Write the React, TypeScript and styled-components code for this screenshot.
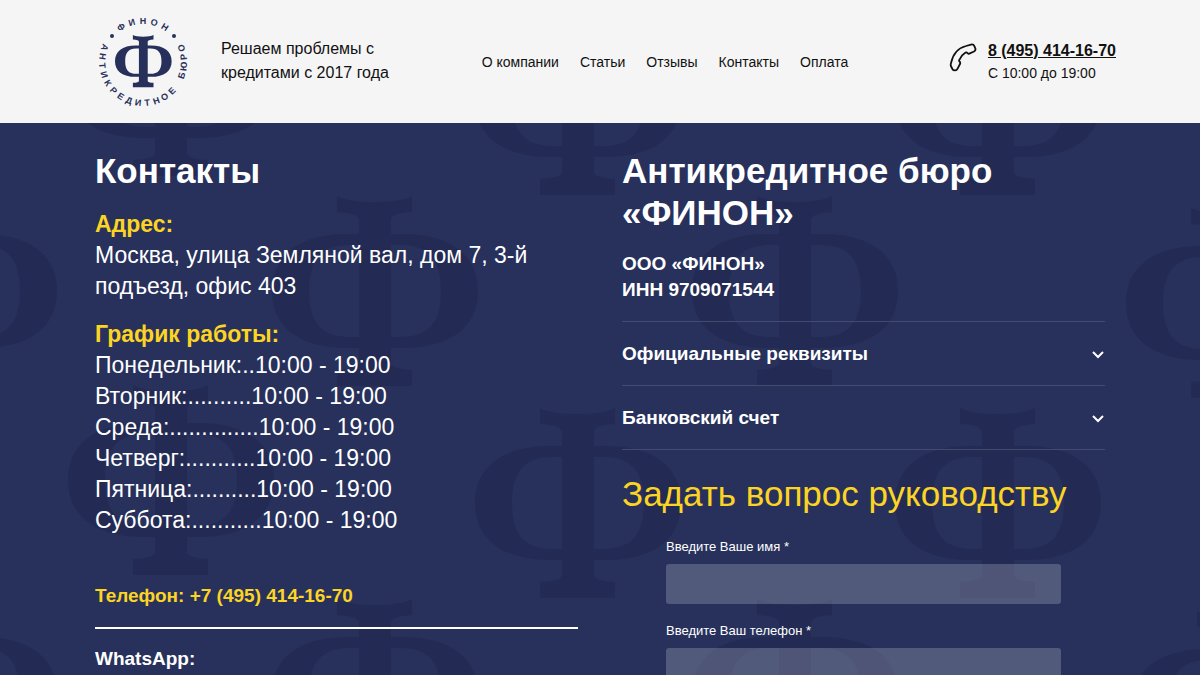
import React, { useId } from "react";
import styled, { createGlobalStyle } from "styled-components";

const GlobalStyle = createGlobalStyle`
  *, *::before, *::after { box-sizing: border-box; }
  html, body { margin: 0; }
  body {
    font-family: "Liberation Sans", Arial, sans-serif;
    background: #27315c;
    color: #111;
  }
  h1, h2, h3, p, ul { margin: 0; padding: 0; }
`;

const PHI =
  "M65 0 Q76 6 102 6 Q129 6 140 0 V16 Q119 17 119 24 V38 H130 C180 38 206 60 206 95 C206 130 180 152 130 152 H119 V167 Q119 173 140 174 V190 H65 V174 Q87 173 87 167 V152 H76 C26 152 0 130 0 95 C0 60 26 38 76 38 H87 V24 Q87 17 65 16 Z M87 49 H77 C49 49 37 64 37 95 C37 126 49 141 77 141 H87 Z M119 49 V141 H129 C157 141 169 126 169 95 C169 64 157 49 129 49 Z";

const Header = styled.header`
  background: #f5f5f5;
  padding: 12px 24px;
`;

const HeaderInner = styled.div`
  max-width: 1032px;
  margin: 0 auto;
  padding-left: 11px;
  display: flex;
  align-items: center;
  justify-content: space-between;
  min-height: 99px;
`;

const Brand = styled.div`
  display: flex;
  align-items: center;
  gap: 30px;
`;

const HomeLink = styled.a`
  display: block;
  line-height: 0;
`;

const Slogan = styled.p`
  width: 170px;
  padding-bottom: 2px;
  font-size: 16px;
  line-height: 24px;
`;

const Nav = styled.nav`
  display: flex;
  gap: 21px;
  margin-right: 10px;
`;

const NavLink = styled.a`
  color: #111;
  font-size: 14px;
  line-height: 20px;
  text-decoration: none;
`;

const Call = styled.div`
  display: flex;
  align-items: flex-start;
  gap: 11px;
  padding-bottom: 2px;
`;

const CallNumber = styled.a`
  display: block;
  color: #111;
  font-size: 16px;
  font-weight: 700;
  line-height: 24px;
`;

const CallHours = styled.p`
  font-size: 14px;
  line-height: 20px;
`;

const Main = styled.main`
  position: relative;
  overflow: hidden;
  color: #fff;
  padding: 27px 24px 40px;
`;

const Backdrop = styled.svg`
  position: absolute;
  top: 0;
  left: 50%;
  margin-left: -600px;
  overflow: visible;
`;

const Columns = styled.div`
  position: relative;
  max-width: 1010px;
  margin: 0 auto;
  display: grid;
  grid-template-columns: 1fr 1fr;
  column-gap: 44px;
`;

const Title = styled.h1`
  font-size: 35px;
  line-height: 42px;
  font-weight: 700;
`;

const Info = styled.section`
  margin-top: 17px;
  font-size: 23px;
  line-height: 31px;
`;

const InfoTitle = styled.h2`
  color: #fcd423;
  font-size: 23px;
  line-height: 31px;
`;

const Days = styled.ul`
  list-style: none;
`;

const PhoneLine = styled.a`
  display: block;
  margin-top: 46px;
  padding-bottom: 17px;
  border-bottom: 2px solid #fff;
  color: #fcd423;
  font-size: 19px;
  line-height: 28px;
  font-weight: 700;
  text-decoration: none;
`;

const Messenger = styled.p`
  margin-top: 17px;
  font-size: 19px;
  line-height: 26px;
  font-weight: 700;
`;

const Company = styled.p`
  margin: 17px 0 18px;
  font-size: 19px;
  line-height: 26px;
  font-weight: 700;
`;

const Accordion = styled.div`
  border-top: 1px solid #434b70;
`;

const AccordionButton = styled.button`
  width: 100%;
  display: flex;
  align-items: center;
  justify-content: space-between;
  padding: 18px 0;
  border: 0;
  border-bottom: 1px solid #434b70;
  background: none;
  color: #fff;
  font: 700 19px/27px "Liberation Sans", Arial, sans-serif;
  text-align: left;
`;

const AskTitle = styled.h2`
  margin-top: 23px;
  color: #fcd423;
  font-size: 35px;
  line-height: 42px;
  font-weight: 400;
`;

const Form = styled.form`
  margin-top: 22px;
  padding: 0 44px;
  display: grid;
  row-gap: 17px;
`;

const Field = styled.div`
  display: grid;
  row-gap: 7px;
`;

const Label = styled.label`
  font-size: 13px;
  line-height: 20px;
`;

const Input = styled.input`
  width: 100%;
  height: 40px;
  padding: 0 12px;
  border: 0;
  border-radius: 3px;
  background: rgba(255, 255, 255, 0.2);
  color: #fff;
  font: 16px "Liberation Sans", Arial, sans-serif;
`;

const ringTop = [..."ФИНОН"];
const ringBottom = [..."АНТИКРЕДИТНОЕ БЮРО"];

function Logo() {
  return (
    <svg width="96" height="96" viewBox="-48 -48 96 96" role="img" aria-label="Финон">
      <g transform="translate(-28 -27) scale(0.275)" fill="#27305b">
        <path d={PHI} />
      </g>
      <g fill="#27305b" fontFamily="Liberation Sans" fontWeight="700" fontSize="9" textAnchor="middle">
        {ringTop.map((c, i) => (
          <text key={i} y="-38" transform={`rotate(${(i - 2) * 16})`}>{c}</text>
        ))}
        {ringBottom.map((c, i) => (
          <text key={i} y="44" transform={`rotate(${111 - i * 13})`}>{c}</text>
        ))}
        <circle cx="-31" cy="-26" r="2" />
        <circle cx="31" cy="-26" r="2" />
      </g>
    </svg>
  );
}

const glyphs = [
  [68, -137], [475, -118], [895, -118],
  [-149, 73], [272, 73], [692, 73], [1126, 85],
  [68, 262], [475, 285], [895, 285],
  [-149, 476], [272, 476], [692, 476], [1132, 488],
];

function Pattern() {
  return (
    <Backdrop width="1400" height="700" aria-hidden="true">
      {glyphs.map(([x, y]) => (
        <path key={`${x} ${y}`} d={PHI} transform={`translate(${x} ${y})`} fill="#232b54" />
      ))}
    </Backdrop>
  );
}

function Chevron() {
  return (
    <svg width="14" height="14" viewBox="0 0 14 14" fill="none" stroke="#fff" strokeWidth="2" aria-hidden="true">
      <path d="M2 5 L7 10 L12 5" />
    </svg>
  );
}

const menu = ["О компании", "Статьи", "Отзывы", "Контакты", "Оплата"];
const days = [
  "Понедельник:..10:00 - 19:00",
  "Вторник:..........10:00 - 19:00",
  "Среда:..............10:00 - 19:00",
  "Четверг:...........10:00 - 19:00",
  "Пятница:..........10:00 - 19:00",
  "Суббота:...........10:00 - 19:00",
];

function TextField({ label, type }: { label: string; type: string }) {
  const id = useId();
  return (
    <Field>
      <Label htmlFor={id}>{label}</Label>
      <Input id={id} type={type} />
    </Field>
  );
}

export default function App() {
  return (
    <>
      <GlobalStyle />
      <Header>
        <HeaderInner>
          <Brand>
            <HomeLink href="#"><Logo /></HomeLink>
            <Slogan>Решаем проблемы с кредитами с 2017 года</Slogan>
          </Brand>
          <Nav>
            {menu.map((m) => <NavLink key={m} href="#">{m}</NavLink>)}
          </Nav>
          <Call>
            <svg width="28" height="36" viewBox="0 0 28 36" fill="none" stroke="#111" strokeWidth="1.8" strokeLinejoin="round" aria-hidden="true">
              <path d="M2 24 C4 15 9 9 17 7 L22 5.6 Q24.3 5 25.3 7 L26.3 9.4 Q27 11.4 25 12.5 L20.3 14.6 Q19 15 18.3 14 Q17.6 13 16.5 13.6 C13.5 15.5 11.5 18 10.3 21 Q9.8 22 10.7 22.7 Q11.6 23.5 11 25 L8.6 29.6 Q7.8 31.3 6 31.4 Q4.2 31.5 3.4 30 L1.9 27 Q1.5 26 2 24 Z" />
            </svg>
            <div>
              <CallNumber href="tel:+74954141670">8 (495) 414-16-70</CallNumber>
              <CallHours>С 10:00 до 19:00</CallHours>
            </div>
          </Call>
        </HeaderInner>
      </Header>
      <Main>
        <Pattern />
        <Columns>
          <div>
            <Title>Контакты</Title>
            <Info>
              <InfoTitle>Адрес:</InfoTitle>
              <p>Москва, улица Земляной вал, дом 7, 3-й подъезд, офис 403</p>
            </Info>
            <Info>
              <InfoTitle>График работы:</InfoTitle>
              <Days>{days.map((d) => <li key={d}>{d}</li>)}</Days>
            </Info>
            <PhoneLine href="tel:+74954141670">Телефон: +7 (495) 414-16-70</PhoneLine>
            <Messenger>WhatsApp:</Messenger>
          </div>
          <div>
            <Title as="h2">Антикредитное бюро «ФИНОН»</Title>
            <Company>ООО «ФИНОН»<br />ИНН 9709071544</Company>
            <Accordion>
              <AccordionButton type="button">Официальные реквизиты<Chevron /></AccordionButton>
              <AccordionButton type="button">Банковский счет<Chevron /></AccordionButton>
            </Accordion>
            <AskTitle>Задать вопрос руководству</AskTitle>
            <Form>
              <TextField label="Введите Ваше имя *" type="text" />
              <TextField label="Введите Ваш телефон *" type="tel" />
            </Form>
          </div>
        </Columns>
      </Main>
    </>
  );
}
